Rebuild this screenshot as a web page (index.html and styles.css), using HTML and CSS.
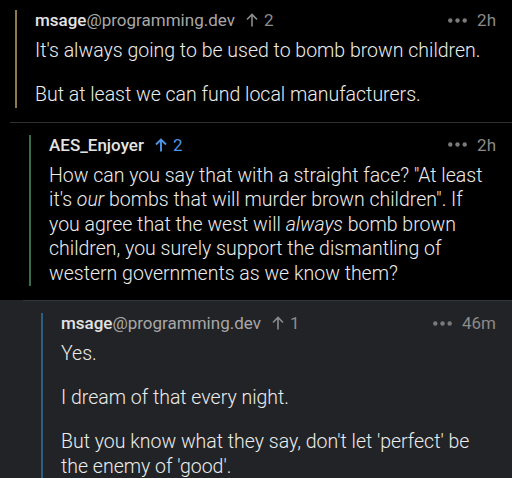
FILE: index.html
```html
<!DOCTYPE html>
<html>
<head>
<meta charset="utf-8">
<link rel="stylesheet" href="styles.css">
</head>
<body>
<div class="thread">
  <div class="comment lvl1">
    <div class="inner bar-gold">
      <div class="head">
        <span class="user"><b>msage</b>@programming.dev</span>
        <span class="vote">
          <svg class="arrow" viewBox="0 0 12 14" width="12" height="14"><path d="M6 13.5V1.5M1 6.5L6 1.5L11 6.5" fill="none" stroke="currentColor" stroke-width="1.6"/></svg>2
        </span>
        <span class="spacer"></span>
        <svg class="dots" viewBox="0 0 19 5" width="19" height="5"><circle cx="2.3" cy="2.5" r="2.2"/><circle cx="9.5" cy="2.5" r="2.2"/><circle cx="16.7" cy="2.5" r="2.2"/></svg>
        <span class="time">2h</span>
      </div>
      <p>It's always going to be used to bomb brown children.</p>
      <p>But at least we can fund local manufacturers.</p>
    </div>
  </div>

  <div class="comment lvl2">
    <div class="inner bar-green">
      <div class="head">
        <span class="user"><b>AES_Enjoyer</b></span>
        <span class="vote up">
          <svg class="arrow" viewBox="0 0 12 14" width="12" height="14"><path d="M6 13.5V1.5M1 6.5L6 1.5L11 6.5" fill="none" stroke="currentColor" stroke-width="1.9"/></svg>2
        </span>
        <span class="spacer"></span>
        <svg class="dots" viewBox="0 0 19 5" width="19" height="5"><circle cx="2.3" cy="2.5" r="2.2"/><circle cx="9.5" cy="2.5" r="2.2"/><circle cx="16.7" cy="2.5" r="2.2"/></svg>
        <span class="time">2h</span>
      </div>
      <p>How can you say that with a straight face? "At least it's <i>our</i> bombs that will murder brown children". If you agree that the west will <i>always</i> bomb brown children, you surely support the dismantling of western governments as we know them?</p>
    </div>
  </div>

  <div class="highlight">
    <div class="comment lvl3">
      <div class="inner bar-blue">
        <div class="head">
          <span class="user"><b>msage</b>@programming.dev</span>
          <span class="vote">
            <svg class="arrow" viewBox="0 0 12 14" width="12" height="14"><path d="M6 13.5V1.5M1 6.5L6 1.5L11 6.5" fill="none" stroke="currentColor" stroke-width="1.6"/></svg>1
          </span>
          <span class="spacer"></span>
          <svg class="dots" viewBox="0 0 19 5" width="19" height="5"><circle cx="2.3" cy="2.5" r="2.2"/><circle cx="9.5" cy="2.5" r="2.2"/><circle cx="16.7" cy="2.5" r="2.2"/></svg>
          <span class="time">46m</span>
        </div>
        <p>Yes.</p>
        <p>I dream of that every night.</p>
        <p>But you know what they say, don't let 'perfect' be the enemy of 'good'.</p>
      </div>
    </div>
  </div>
</div>
</body>
</html>
```

FILE: styles.css
```css
html, body {
  margin: 0;
  padding: 0;
  background: #000;
}
body {
  font-family: Roboto, "Noto Sans", sans-serif;
  color: #e6e6e6;
  width: 512px;
  height: 478px;
  overflow: hidden;
}
.comment {
  padding: 10px 16px 14px 0;
}
.lvl1 {
  padding-left: 15px;
}
.lvl2 {
  margin-left: 10px;
  padding-left: 19px;
  padding-top: 12px;
  border-top: 1px solid #2e2e2e;
}
.highlight {
  background: #222326;
  padding-bottom: 40px;
}
.lvl3 {
  margin-left: 23px;
  padding-left: 18px;
  padding-top: 12px;
  border-top: 1px solid #34353a;
}
.inner {
  border-left: 2px solid;
  padding-left: 18px;
}
.bar-gold { border-color: #8c7a4c; }
.bar-green { border-color: #3d6b4e; }
.bar-blue { border-color: #2e5f82; }
.head {
  display: flex;
  align-items: center;
  height: 20px;
  font-size: 17px;
  line-height: 20px;
  color: #a8a8a8;
  margin-bottom: 9px;
}
.user b {
  font-weight: 500;
  color: #e4e4e4;
}
.vote {
  display: flex;
  align-items: center;
  margin-left: 11px;
  color: #8c8c8c;
}
.vote .arrow {
  margin-right: 6px;
}
.vote.up {
  color: #4f95e6;
}
.spacer { flex: 1; }
.dots {
  fill: #7a7a7a;
  margin-right: 10px;
}
.time {
  color: #8a8a8a;
}
p {
  margin: 0 0 19.5px;
  font-size: 19.5px;
  line-height: 24.5px;
  font-weight: 300;
  color: #ececec;
}
p:last-child {
  margin-bottom: 0;
}
i {
  font-style: italic;
}
```
